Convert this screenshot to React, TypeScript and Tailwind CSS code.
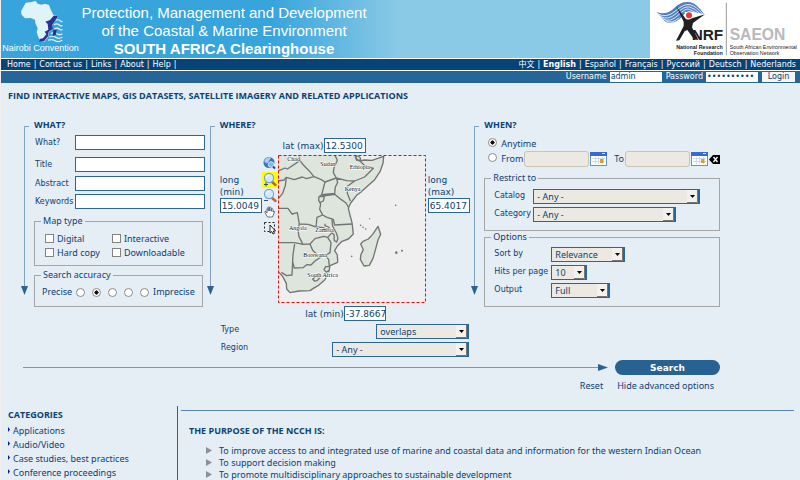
import { type ReactNode } from "react";
import clsx from "clsx";

const menuLinks = ["Home", "Contact us", "Links", "About", "Help"];
const languages = ["中文", "English", "Español", "Français", "Русский", "Deutsch", "Nederlands"];
const categories = ["Applications", "Audio/Video", "Case studies, best practices", "Conference proceedings"];
const purposes = [
  "To improve access to and integrated use of marine and coastal data and information for the western Indian Ocean",
  "To support decision making",
  "To promote multidisciplinary approaches to sustainable development",
];

const labelFont = "font-['DejaVu_Sans','Noto_Sans_CJK_SC',sans-serif] text-[8px]";
const headingFont = "font-['Open_Sans','Noto_Sans',sans-serif] font-bold";
const boxClass = "h-[15px] min-w-0 border border-[#2a6699] bg-white";

// Down-pointing rail that runs along the left side of every search column
function Rail() {
  return (
    <div className="flex w-[8px] shrink-0 flex-col pt-[7px]">
      <div className="ml-[3px] flex-1 border-t border-l border-[#7fa3c2]" />
      <svg className="h-[9px] w-[7px]" viewBox="0 0 7 9">
        <path d="M0 0H7L3.5 9Z" fill="#2a6393" />
      </svg>
    </div>
  );
}

function Column({ title, children }: { title: string; children: ReactNode }) {
  return (
    <section className="flex h-[176px] min-w-0">
      <Rail />
      <div className="ml-[5px] min-w-0 flex-1">
        <h2 className={clsx(headingFont, "h-[13px] leading-[12px] whitespace-nowrap")}>{title}</h2>
        {children}
      </div>
    </section>
  );
}

function TextRow({ id, label, className }: { id: string; label: string; className?: string }) {
  return (
    <div className={clsx("flex items-center pr-[2px]", className)}>
      <label htmlFor={id} className={clsx(labelFont, "w-[41px] shrink-0 pl-px leading-[13px]")}>
        {label}
      </label>
      <input id={id} className={clsx(boxClass, "flex-1")} />
    </div>
  );
}

function Dropdown({ id, value, className }: { id: string; value: string; className?: string }) {
  return (
    <div className={clsx("relative h-[15px]", className)}>
      <select
        id={id}
        className="block h-full w-full appearance-none border border-r-2 border-[#2a6699] bg-[#ece9e2] pl-[3px] leading-[13px] text-[#0b4275]"
      >
        <option>{value}</option>
      </select>
      <svg className="pointer-events-none absolute top-px right-[2px] h-[13px] w-[11px]" viewBox="0 0 11 13">
        <path d="M0 0H11V13H0Z" fill="#f3f1ec" />
        <path d="M0 12.5H10.5V0" fill="none" stroke="#77756f" />
        <path d="M3 5H8L5.500 8Z" fill="#000" />
      </svg>
    </div>
  );
}

function Group({ legend, className, children }: { legend: string; className?: string; children: ReactNode }) {
  return (
    <fieldset className={clsx("border border-[#a3a5a6] px-[6px]", className)}>
      <legend className="px-[2px] leading-[12px]">{legend}</legend>
      {children}
    </fieldset>
  );
}

const radioClass =
  "size-[9px] shrink-0 appearance-none rounded-full border border-[#8d8b86] bg-white checked:bg-[radial-gradient(circle,#111_38%,#fff_46%)]";

function Check({ label }: { label: string }) {
  return (
    <label className="flex h-[14px] items-center gap-[3px] leading-[14px] whitespace-nowrap">
      <input type="checkbox" className="mb-[2px] size-[9px] shrink-0 appearance-none border border-[#85837e] bg-white" />
      {label}
    </label>
  );
}

function Calendar() {
  return (
    <svg className="h-[14px] w-[17px]" viewBox="0 0 17 14">
      <rect x="0.5" y="0.5" width="16" height="13" fill="#fff" stroke="#5f94d8" />
      <path d="M0 0H17V4H0Z" fill="#346bd2" />
      <path d="M12 1.500H15" stroke="#dce8ff" />
      <path d="M2 6.500H15M2 9.500H15M5.500 5V12M8.500 5V12M12.500 5V12" stroke="#cdd9e8" />
      <rect x="10" y="7" width="3.500" height="4" fill="#d6a22c" />
    </svg>
  );
}

function Lens({ sign }: { sign: string }) {
  return (
    <svg viewBox="0 0 16 16" className="size-[16px]">
      <path d="M9 9L13.500 13" stroke="#b06a35" strokeWidth="2.400" strokeLinecap="round" />
      <circle cx="7" cy="6" r="4.600" fill="#cfe8fc" stroke="#7da0c8" strokeWidth="1.100" />
      <path d="M4.500 5.500A2.700 2.700 0 0 1 7.500 3.400" stroke="#fff" fill="none" />
      <path d={sign} stroke="#224e9c" />
    </svg>
  );
}

function MapTools() {
  return (
    <div className="flex w-[16px] shrink-0 flex-col pt-px">
      <button type="button" aria-label="Full extent" className="size-[16px]">
        <svg viewBox="0 0 16 16">
          <circle cx="7" cy="6.500" r="5.500" fill="#3676ba" />
          <path d="M2.500 4Q5 0.500 9 1.500L7 5L5 7.500L2.500 6Z" fill="#aed0ec" />
          <circle cx="9" cy="8.500" r="2.800" fill="#83b9e5" stroke="#c7dff2" />
          <path d="M11 10.500L13 12.500" stroke="#174f94" strokeWidth="2" />
        </svg>
      </button>
      <button type="button" aria-label="Zoom in" className="size-[16px] bg-[#ffff00]">
        <Lens sign="M2 12.500H6M4 10.500V14.500" />
      </button>
      <button type="button" aria-label="Zoom out" className="size-[16px]">
        <Lens sign="M2 12.500H6" />
      </button>
      <button type="button" aria-label="Pan" className="size-[16px]">
        <svg viewBox="0 0 16 16">
          <path
            d="M5.500 13L3 8.500Q2.500 6.500 4 7.500L5 9V4.500Q5.500 3.500 6.200 4.500V7V3.300Q7 2.300 7.700 3.300V7V3.600Q8.600 2.600 9.300 3.800V7.300V5Q10.300 4 11 5.200V8Q13 6.500 12.500 8L10.500 13Z"
            fill="#fff"
            stroke="#57606f"
            strokeWidth="0.900"
          />
        </svg>
      </button>
      <button type="button" aria-label="Select area" className="size-[16px]">
        <svg viewBox="0 0 16 16">
          <rect x="2.500" y="2.500" width="10" height="9" fill="none" stroke="#222" strokeDasharray="2 2" />
          <path d="M8 5V13L9.800 11.500L11 14L12.500 13.300L11.300 11H13.500Z" fill="#fff" stroke="#111" strokeWidth="0.900" />
        </svg>
      </button>
    </div>
  );
}

const mapLabels = [
  { name: "Chad", x: 98, y: 47 },
  { name: "Sudan", x: 197, y: 62 },
  { name: "Ethiopia", x: 285, y: 72 },
  { name: "Kenya", x: 270, y: 138 },
  { name: "Angola", x: 103, y: 255 },
  { name: "Zambia", x: 182, y: 260 },
  { name: "Botswana", x: 146, y: 335 },
  { name: "South Africa", x: 158, y: 395 },
];

function AfricaMap() {
  return (
    <svg className="size-[148px] shrink-0 bg-[#efefef]" viewBox="70 30 444 444">
      <g fill="#dde5dd" stroke="#747474" strokeWidth="4" strokeLinejoin="round">
        <path d="M65 25H303L304 40L314 48L330 45L352 46L387 34L385 55L376 80L360 104L338 124L318 142L306 151L288 174L281 190L287 214L292 233L296 267L281 282L262 289L248 303L240 317L248 330L249 352L226 362L222 384L210 405L190 422L176 430L166 437L133 438L106 443L96 432L95 415L84 394L65 375Z" />
        <path d="M370 244L378 268L370 285L364 308L355 340L344 361L328 363L317 343L319 328L326 314L318 297L325 289L341 282L354 268Z" />
        <g fill="none">
          <path d="M65 80L91 69L98 72L136 47L131 25M136 47L146 60L163 77L178 95L155 101L143 96L119 104L95 97L88 105L65 109M178 95L200 104L211 111L245 99L236 83L238 68L248 46L238 25" />
          <path d="M245 99L276 107L300 108L330 96L356 70L331 63L316 48M300 108L278 124L278 145L287 168M211 111L207 126L201 149L240 145L242 126L249 112L245 99M201 149L204 153L240 148L260 164L274 174L281 186" />
          <path d="M201 149L193 155L192 166L198 177L195 193L204 210L217 217L236 223L240 240L292 237M95 97L92 122L84 145L74 157L65 166M65 190L100 190L112 207L128 203L134 237L161 238L184 246L207 248L219 257L224 248L211 242V236M184 246L187 217L204 210" />
          <path d="M232 222L234 244L245 264L250 280L246 291L239 287L238 269L227 258M65 293H120L145 298L166 297L181 281L207 274L219 277L235 260M134 237L130 255L133 275L145 298" />
          <path d="M120 297L115 328L112 390L96 392L80 382M114 350L119 369L145 368L156 359L169 360L181 348L201 334L213 331M166 297L174 316L188 330L213 331L226 323L229 293L219 277M213 331L222 344L224 365M224 365L213 365L208 374L215 382L223 376M174 402L185 394L195 399L187 407L179 408Z" />
          <path d="M193 155H209L206 168L194 173" />
          <path d="M302 36Q310 30 316 38T306 46Z" />
        </g>
      </g>
      <g fill="#777">
        <circle cx="423" cy="181" r="2.500" />
        <circle cx="318" cy="241" r="2.500" />
        <circle cx="325" cy="247" r="2.500" />
        <circle cx="333" cy="252" r="2.500" />
        <circle cx="345" cy="221" r="2" />
        <circle cx="291" cy="334" r="2.500" />
        <circle cx="425" cy="323" r="4" />
        <circle cx="442" cy="317" r="3" />
      </g>
      <g
        className="font-['Liberation_Serif',serif]"
        fontSize="18"
        fill="#111"
        stroke="#fff"
        strokeWidth="3"
        paintOrder="stroke"
      >
        {mapLabels.map((label) => (
          <text key={label.name} x={label.x} y={label.y}>
            {label.name}
          </text>
        ))}
      </g>
      <rect x="71.500" y="31.500" width="441" height="441" fill="none" stroke="#f00" strokeWidth="3" strokeDasharray="9 6" />
    </svg>
  );
}

function Coordinate({ id, label, value, stacked }: { id: string; label: string; value: string; stacked?: boolean }) {
  return (
    <div className={clsx("font-['DejaVu_Sans',sans-serif]", stacked ? "w-[42px] shrink-0" : "flex items-center")}>
      <label htmlFor={id} className="block leading-[12px]">
        {label}
      </label>
      <input id={id} defaultValue={value} className={clsx(boxClass, "block w-[42px] pl-px")} />
    </div>
  );
}

function NairobiLogo() {
  return (
    <div className="flex w-[79px] shrink-0 flex-col items-center">
      <svg className="h-[43px] w-[44px]" viewBox="0 0 132 129">
        <path
          d="M20 8L38 6L50 3L56 11L68 14L78 11L90 15L96 31L104 46L117 47L113 59L98 76L99 89L90 97L87 111L76 125L64 124L58 111L53 97L56 85L49 70L48 59L35 54L18 55L8 44L6 34L12 23Z"
          fill="#dff3f9"
        />
        <path
          d="M104 47L117 47L111 60L99 74L101 87L89 96L87 109L75 124L61 125L62 117L72 115L82 103L77 95L88 89L86 72L79 65L93 60Z"
          fill="#29348f"
        />
        <path
          d="M110 61Q118 57 123 62T131 64M105 74Q114 69 121 75T130 76M106 87Q114 82 121 87T130 88M96 101Q106 95 114 101T130 101M91 111Q102 106 110 112T130 112M87 121Q99 116 108 122T130 121"
          fill="none"
          stroke="#dff3f9"
          strokeWidth="3.500"
        />
        <path d="M103 90L113 89L111 104L101 108Z" fill="#29348f" />
      </svg>
      <span className="font-['Liberation_Sans',sans-serif] text-[9px] leading-[10px] whitespace-nowrap">
        Nairobi Convention
      </span>
    </div>
  );
}

function NrfLogo() {
  return (
    <svg className="h-[58px] w-[150px] shrink-0 bg-white" viewBox="0 0 450 174">
      <g className="font-['Liberation_Sans',sans-serif]">
        <path d="M20 36Q48 48 73 24Q95 2 122 7Q144 14 162 43L118 34Q108 34 98 48Q75 75 47 66Z" fill="#4e7fc0" />
        <g fill="none" stroke="#fff" strokeWidth="2.500">
          <path d="M24 42Q50 56 76 33T120 14T158 42" />
          <path d="M31 49Q54 63 79 40T119 21T150 41" />
          <path d="M38 56Q60 69 84 46T118 28T142 40" />
          <path d="M46 62Q66 73 88 53" />
        </g>
        <path d="M103 35L165 43L128 62L112 60Z" fill="#fff" />
        <circle cx="117" cy="46" r="9" fill="#ed3237" />
        <path
          d="M78 18L107 56Q115 62 126 55L165 43L129 69L126 82L145 119H133L112 90L104 94L88 121L78 122L101 78L101 65Z"
          fill="#202022"
        />
        <text x="125" y="119" fontSize="46" fontWeight="bold" fill="#202022">
          NRF
        </text>
        <text x="239" y="119" fontSize="47" fontWeight="bold" fill="#b7b9bc">
          SAEON
        </text>
        <path d="M229 8V166" stroke="#999" strokeWidth="3" />
        <g fontSize="16" fill="#202022">
          <text x="218" y="147" textAnchor="end" fontWeight="bold">
            National Research
          </text>
          <text x="218" y="165" textAnchor="end" fontWeight="bold">
            Foundation
          </text>
          <text x="239" y="147">South African Environmental</text>
          <text x="239" y="165">Observation Network</text>
        </g>
      </g>
    </svg>
  );
}

function Header() {
  return (
    <header className="text-white">
      <div className="flex h-[58px] bg-[linear-gradient(to_right,#38a4dc_270px,#8bcae7_400px)]">
        <NairobiLogo />
        <h1 className="w-[288px] shrink-0 pt-[4px] text-center font-['Liberation_Sans',sans-serif] text-[15px] leading-[18px] whitespace-nowrap">
          Protection, Management and Development
          <br />
          of the Coastal &amp; Marine Environment
          <br />
          <strong>SOUTH AFRICA Clearinghouse</strong>
        </h1>
        <div className="flex-1" />
        <NrfLogo />
      </div>
      <nav
        className={clsx(
          labelFont,
          "flex h-[13px] items-center justify-between border-y border-white bg-[#064379] pr-[4px] pl-[6px] whitespace-nowrap",
        )}
      >
        <div className="flex">
          {menuLinks.map((item) => (
            <span key={item} className="pr-[3px]">
              <a href="#">{item}</a>
              <span className="pl-[3px]">|</span>
            </span>
          ))}
        </div>
        <div className="flex gap-[3px]">
          {languages.map((language, index) => (
            <span key={language} className="flex gap-[3px]">
              {index > 0 && <span>|</span>}
              <a href="#" className={clsx(language === "English" && "font-bold")}>
                {language}
              </a>
            </span>
          ))}
        </div>
      </nav>
      <form className={clsx(labelFont, "flex h-[12px] items-center justify-end bg-[#266597] pr-[5px]")}>
        <label htmlFor="username">Username</label>
        <input id="username" defaultValue="admin" className="ml-[3px] h-[10px] w-[52px] bg-white px-px text-[#0b4275]" />
        <label htmlFor="password" className="ml-[4px]">
          Password
        </label>
        <input
          id="password"
          type="password"
          defaultValue="clearing12"
          className="ml-[3px] h-[10px] w-[52px] bg-white px-px text-[#0b4275]"
        />
        <button type="button" className="ml-[4px] h-[10px] w-[33px] bg-[#f5f5f3] leading-[10px] text-[#0b4275]">
          Login
        </button>
      </form>
    </header>
  );
}

function WhatColumn() {
  return (
    <Column title="WHAT?">
      <TextRow id="what" label="What?" className="mt-[3px]" />
      <TextRow id="title" label="Title" className="mt-[7px]" />
      <TextRow id="abstract" label="Abstract" className="mt-[4px]" />
      <TextRow id="keywords" label="Keywords" className="mt-[3px]" />
      <Group legend="Map type" className="mt-[6px] mr-[4px] h-[51px]">
        <div className="grid grid-cols-[67px_1fr] pt-[5px] pl-[4px]">
          <Check label="Digital" />
          <Check label="Interactive" />
          <Check label="Hard copy" />
          <Check label="Downloadable" />
        </div>
      </Group>
      <Group legend="Search accuracy" className="mt-[3px] mr-[4px] h-[38px]">
        <div className="flex items-center pt-[5px] pl-px whitespace-nowrap">
          <span>Precise</span>
          <div className="flex gap-[7px] px-[4px]">
            {[1, 2, 3, 4, 5].map((step) => (
              <input
                key={step}
                type="radio"
                name="accuracy"
                aria-label={`Accuracy ${step}`}
                defaultChecked={step === 2}
                className={radioClass}
              />
            ))}
          </div>
          <span>Imprecise</span>
        </div>
      </Group>
    </Column>
  );
}

function WhereColumn() {
  return (
    <Column title="WHERE?">
      <div className="mt-[6px] flex justify-center pr-[43px]">
        <Coordinate id="lat-max" label="lat (max)" value="12.5300" />
      </div>
      <div className="mt-[2px] flex items-start">
        <div className="pt-[19px]">
          <Coordinate id="long-min" label="long (min)" value="15.0049" stacked />
        </div>
        <MapTools />
        <AfricaMap />
        <div className="pt-[19px] pl-[2px]">
          <Coordinate id="long-max" label="long (max)" value="65.4017" stacked />
        </div>
      </div>
      <div className="mt-[3px] flex justify-center">
        <Coordinate id="lat-min" label="lat (min)" value="-37.8667" />
      </div>
      <div className="mt-[3px] flex justify-between pr-[2px]">
        <label htmlFor="type" className={clsx(labelFont, "pl-px leading-[11px]")}>
          Type
        </label>
        <Dropdown id="type" value="overlaps" className="w-[93px]" />
      </div>
      <div className="mt-[3px] flex justify-between pr-[2px]">
        <label htmlFor="region" className={clsx(labelFont, "pl-px leading-[11px]")}>
          Region
        </label>
        <Dropdown id="region" value="- Any -" className="w-[137px]" />
      </div>
    </Column>
  );
}

function SelectRow({
  id,
  label,
  value,
  labelWidth,
  width,
}: {
  id: string;
  label: string;
  value: string;
  labelWidth: string;
  width: string;
}) {
  return (
    <div className="flex pl-[3px]">
      <label htmlFor={id} className={clsx(labelFont, labelWidth, "shrink-0 leading-[13px] whitespace-nowrap")}>
        {label}
      </label>
      <Dropdown id={id} value={value} className={width} />
    </div>
  );
}

function DateBox({ label }: { label: string }) {
  return (
    <>
      <input
        aria-label={label}
        disabled
        className="h-[16px] w-[65px] min-w-0 rounded-[3px] border border-[#cbc5b8] bg-[#ece9e2]"
      />
      <button type="button" aria-label={`${label} calendar`} className="ml-px">
        <Calendar />
      </button>
    </>
  );
}

function WhenColumn() {
  return (
    <Column title="WHEN?">
      <label className="mt-[4px] flex h-[15px] items-center gap-[4px] pl-[4px]">
        <input type="radio" name="period" defaultChecked className={clsx(radioClass, "mb-[2px]")} />
        Anytime
      </label>
      <div className="flex h-[16px] items-center whitespace-nowrap">
        <label className="flex w-[40px] shrink-0 items-center gap-[4px] pl-[4px]">
          <input type="radio" name="period" className={clsx(radioClass, "mb-[3px]")} />
          From
        </label>
        <DateBox label="From date" />
        <span className="ml-[7px] w-[11px] shrink-0">To</span>
        <DateBox label="To date" />
        <button type="button" aria-label="Clear dates" className="ml-px">
          <svg className="h-[9px] w-[11px]" viewBox="0 0 11 9">
            <path d="M4 0H11V9H4L0 4.500Z" fill="#000" />
            <path d="M4.500 2L8.500 7M8.500 2L4.500 7" stroke="#fff" strokeWidth="1.300" />
          </svg>
        </button>
      </div>
      <Group legend="Restrict to" className="mt-[5px] h-[59px]">
        <div className="flex flex-col gap-[3px] pt-[5px]">
          <SelectRow id="catalog" label="Catalog" value="- Any -" labelWidth="w-[39px]" width="w-[167px]" />
          <SelectRow id="category" label="Category" value="- Any -" labelWidth="w-[39px]" width="w-[143px]" />
        </div>
      </Group>
      <Group legend="Options" className="h-[76px]">
        <div className="flex flex-col gap-[3px] pt-[4px]">
          <SelectRow id="sort" label="Sort by" value="Relevance" labelWidth="w-[57px]" width="w-[74px]" />
          <SelectRow id="hits" label="Hits per page" value="10" labelWidth="w-[57px]" width="w-[36px]" />
          <SelectRow id="output" label="Output" value="Full" labelWidth="w-[57px]" width="w-[59px]" />
        </div>
      </Group>
    </Column>
  );
}

export default function App() {
  return (
    <div className="h-screen overflow-hidden border-l border-[#f2eeee] bg-[#e5edf5] font-['Noto_Sans','DejaVu_Sans',sans-serif] text-[9px] leading-[12px] text-[#0b4275]">
      <Header />
      <main>
        <h2 className={clsx(headingFont, "mt-[7px] pl-[7px]")}>
          FIND INTERACTIVE MAPS, GIS DATASETS, SATELLITE IMAGERY AND RELATED APPLICATIONS
        </h2>
        <form>
          <div className="grid h-[258px] grid-cols-[minmax(0,186fr)_minmax(0,265fr)_minmax(0,249fr)] pt-[17px] pr-[80px] pl-[20px]">
            <WhatColumn />
            <WhereColumn />
            <WhenColumn />
          </div>
          <div className="flex items-center pr-[80px] pl-[22px]">
            <div className="h-px flex-1 bg-[#7398ba]" />
            <svg className="h-[7px] w-[10px]" viewBox="0 0 10 7">
              <path d="M0 0L10 3.500L0 7Z" fill="#2a6393" />
            </svg>
            <button
              type="submit"
              className="ml-[7px] h-[15px] w-[105px] rounded-full bg-[#286292] font-['DejaVu_Sans',sans-serif] font-bold text-white"
            >
              Search
            </button>
          </div>
          <div className="mt-[5px] flex justify-end gap-[14px] pr-[86px]">
            <button type="reset">Reset</button>
            <a href="#">Hide advanced options</a>
          </div>
        </form>
        <div className="mt-[14px] flex">
          <aside className="w-[177px] shrink-0 border-r border-[#2a6393] pt-[3px] pl-[7px]">
            <h2 className={headingFont}>CATEGORIES</h2>
            <ul className="mt-[3px]">
              {categories.map((category) => (
                <li key={category} className="flex gap-[3px] leading-[14px]">
                  <svg className="mt-[3px] h-[5px] w-[2px]" viewBox="0 0 2 5">
                    <path d="M0 0L2 2.500L0 5Z" fill="#0a1c96" />
                  </svg>
                  <a href="#">{category}</a>
                </li>
              ))}
            </ul>
          </aside>
          <section className="flex-1 pt-[4px] pr-[6px] pl-[3px]">
            <hr className="border-[#5686b3]" />
            <h2 className={clsx(headingFont, "mt-[14px] pl-[8px]")}>THE PURPOSE OF THE NCCH IS:</h2>
            <ul className="mt-[8px] pl-[25px]">
              {purposes.map((purpose) => (
                <li key={purpose} className="flex gap-[7px] leading-[12px] whitespace-nowrap">
                  <svg className="mt-[2px] h-[7px] w-[6px]" viewBox="0 0 6 7">
                    <path d="M0 0L6 3.500L0 7Z" fill="#8b9197" />
                  </svg>
                  {purpose}
                </li>
              ))}
            </ul>
          </section>
        </div>
      </main>
    </div>
  );
}
